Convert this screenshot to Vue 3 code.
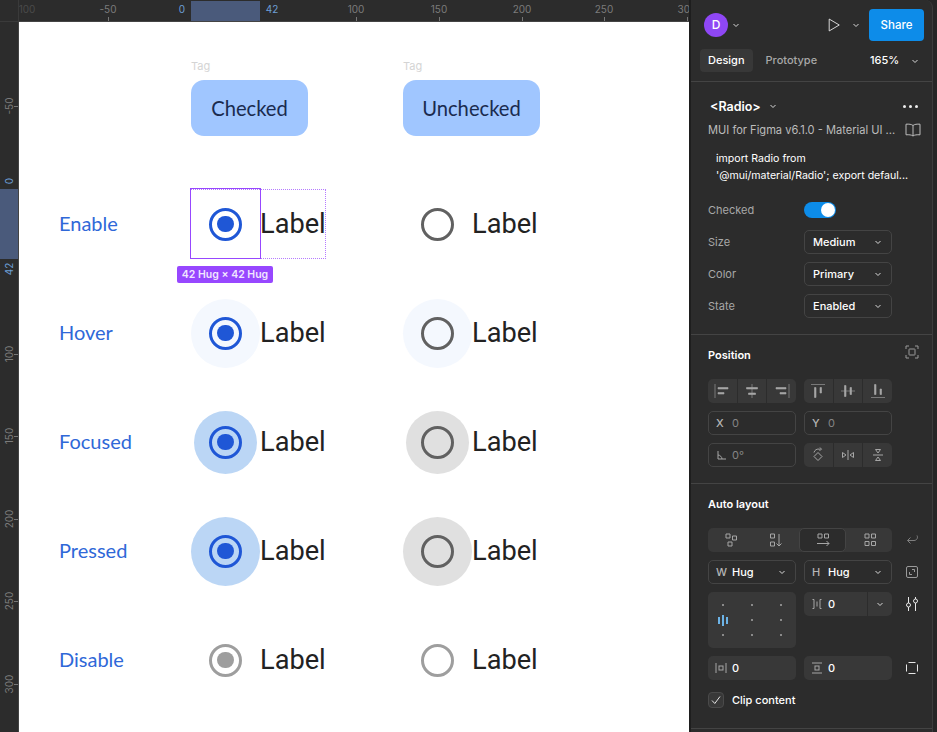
<template>
  <div class="app">
    <main class="workspace">
      <div class="corner"></div>
      <div class="ruler ruler--top">
        <span class="ruler__band ruler__band--top"></span>
        <template v-for="m in topMarks" :key="m.pos">
          <span class="ruler__num" :class="{ 'ruler__num--faint': m.faint }" :style="{ left: m.pos + 'px' }">{{ m.text }}</span>
          <i v-if="m.tick" class="ruler__tick" :style="{ left: m.pos + 'px' }"></i>
        </template>
        <span class="ruler__num ruler__num--active" style="left: 163px">0</span>
        <span class="ruler__num ruler__num--active" style="left: 253px">42</span>
      </div>
      <div class="ruler ruler--left">
        <span class="ruler__band ruler__band--left"></span>
        <template v-for="m in leftMarks" :key="m.text">
          <span class="ruler__num ruler__num--v" :style="{ top: m.pos + 'px' }">{{ m.text }}</span>
          <i class="ruler__tick ruler__tick--v" :style="{ top: m.pos + 'px' }"></i>
        </template>
        <span class="ruler__num ruler__num--v ruler__num--active" style="top: 159px">0</span>
        <span class="ruler__num ruler__num--v ruler__num--active" style="top: 247px">42</span>
      </div>

      <section class="board">
        <div class="board__head">
          <div class="tag-col tag-col--first">
            <span class="tag">Tag</span>
            <div class="chip chip--checked">Checked</div>
          </div>
          <div class="tag-col">
            <span class="tag">Tag</span>
            <div class="chip chip--unchecked">Unchecked</div>
          </div>
        </div>

        <div class="rows">
          <div v-for="row in rows" :key="row.name" class="row">
            <span class="row__name">{{ row.name }}</span>
            <div v-for="col in [true, false]" :key="col" class="radio-item">
              <div class="radio-box">
                <span v-if="row.halo" class="halo" :class="[`halo--${row.halo}`, col ? 'halo--blue' : 'halo--gray']"></span>
                <span class="ring" :class="[col ? 'ring--on' : 'ring--off', { 'ring--disabled': row.disabled }]">
                  <span v-if="col" class="ring__dot"></span>
                </span>
              </div>
              <span class="radio-label">Label</span>
            </div>
            <template v-if="row.selected">
              <span class="sel-outer"></span>
              <span class="sel-inner"></span>
              <span class="sel-size">42 Hug × 42 Hug</span>
            </template>
          </div>
        </div>
      </section>
    </main>

    <aside class="panel">
      <div class="panel__inner">
        <header class="top">
          <span class="avatar">D</span>
          <svg class="chev chev--avatar" viewBox="0 0 8 8"><path d="M1.5 3 4 5.5 6.5 3" /></svg>
          <svg class="play" viewBox="0 0 16 18"><path d="M2.5 2.2v13.6L14 9z" /></svg>
          <svg class="chev chev--play" viewBox="0 0 8 8"><path d="M1.5 3 4 5.5 6.5 3" /></svg>
          <button class="share">Share</button>
        </header>
        <nav class="tabs">
          <span class="tab tab--on">Design</span>
          <span class="tab">Prototype</span>
          <span class="zoom">165%</span>
          <svg class="chev chev--zoom" viewBox="0 0 8 8"><path d="M1.5 3 4 5.5 6.5 3" /></svg>
        </nav>

        <section class="sec sec--comp">
          <div class="comp-title">
            <strong>&lt;Radio&gt;</strong>
            <svg class="chev" viewBox="0 0 8 8"><path d="M1.5 3 4 5.5 6.5 3" /></svg>
            <span class="dots"><i></i><i></i><i></i></span>
          </div>
          <div class="comp-lib">
            <span>MUI for Figma v6.1.0 - Material UI ...</span>
            <svg class="book" viewBox="0 0 16 14"><path d="M8 2.5C6.5 1.2 4 1 1 1.200v10.600c3-.2 5.500 0 7 1.200 1.500-1.200 4-1.400 7-1.200V1.200C12 1 9.500 1.200 8 2.500zM8 2.500V13" /></svg>
          </div>
          <p class="comp-desc">import Radio from<br />'@mui/material/Radio'; export defaul...</p>
          <div class="props">
            <div class="prop">
              <span class="prop__name">Checked</span>
              <span class="toggle"><i></i></span>
            </div>
            <div v-for="p in props" :key="p.name" class="prop">
              <span class="prop__name">{{ p.name }}</span>
              <div class="select">
                <span>{{ p.value }}</span>
                <svg class="chev" viewBox="0 0 8 8"><path d="M1.5 3 4 5.5 6.5 3" /></svg>
              </div>
            </div>
          </div>
        </section>

        <section class="sec sec--pos">
          <div class="sec__head">
            <h4>Position</h4>
            <svg class="side-icon side-icon--frame" viewBox="0 0 14 14"><path d="M1 4V1h3M10 1h3v3M13 10v3h-3M4 13H1v-3" /><rect x="4" y="4" width="6" height="6" rx=".5" /></svg>
          </div>
          <div class="grid2">
            <div class="seg">
              <span v-for="ic in alignH" :key="ic" class="seg__cell"><svg class="ic ic--solid" viewBox="0 0 16 16"><path :d="ic" /></svg></span>
            </div>
            <div class="seg">
              <span v-for="ic in alignV" :key="ic" class="seg__cell"><svg class="ic ic--solid" viewBox="0 0 16 16"><path :d="ic" /></svg></span>
            </div>
            <div class="field"><b>X</b><span class="field__val">0</span></div>
            <div class="field"><b>Y</b><span class="field__val">0</span></div>
            <div class="field">
              <svg class="ic ic--angle" viewBox="0 0 12 12"><path d="M2 2v8h8M2 6c2 0 4 2 4 4" /></svg>
              <span class="field__val">0°</span>
            </div>
            <div class="seg">
              <span v-for="ic in transforms" :key="ic" class="seg__cell"><svg class="ic" viewBox="0 0 16 16"><path :d="ic" /></svg></span>
            </div>
          </div>
        </section>

        <section class="sec sec--auto">
          <h4>Auto layout</h4>
          <div class="auto-row">
            <div class="flow">
              <span v-for="(ic, i) in flows" :key="ic" class="flow__cell" :class="{ 'flow__cell--on': i === 2 }"><svg class="ic" viewBox="0 0 16 16"><path :d="ic" /></svg></span>
            </div>
            <svg class="side-icon side-icon--dim" viewBox="0 0 14 14"><path d="M12 2.500c1.200 2 0 5-3 5H2.500M5.500 4.500l-3 3 3 3" /></svg>
          </div>
          <div class="auto-row">
            <div class="grid2">
              <div class="field"><b>W</b><strong>Hug</strong><svg class="chev" viewBox="0 0 8 8"><path d="M1.5 3 4 5.5 6.5 3" /></svg></div>
              <div class="field"><b>H</b><strong>Hug</strong><svg class="chev" viewBox="0 0 8 8"><path d="M1.5 3 4 5.5 6.5 3" /></svg></div>
            </div>
            <svg class="side-icon" viewBox="0 0 14 14"><rect x="1.500" y="1.500" width="11" height="11" rx="1.500" /><path d="M4.500 7v2.500H7M7 4.500h2.500V7" /></svg>
          </div>
          <div class="auto-row auto-row--tall">
            <div class="grid2 grid2--top">
              <div class="align-box">
                <template v-for="n in 9" :key="n">
                  <span v-if="n === 4" class="align-bars"><i></i><i></i><i></i></span>
                  <i v-else class="align-dot"></i>
                </template>
              </div>
              <div class="gap-field">
                <svg class="ic ic--small" viewBox="0 0 12 12"><path d="M1.500 1.500H3v9H1.500M10.500 1.500H9v9h1.500M6 3.500v5" /></svg>
                <strong>0</strong>
                <span class="gap-field__drop"><svg class="chev" viewBox="0 0 8 8"><path d="M1.5 3 4 5.5 6.5 3" /></svg></span>
              </div>
            </div>
            <svg class="side-icon side-icon--tune" viewBox="0 0 14 16"><path d="M3.500 1v6M3.500 11v4M10.500 1v2M10.500 7v8" /><circle cx="3.500" cy="9" r="2" /><circle cx="10.500" cy="5" r="2" /></svg>
          </div>
          <div class="auto-row">
            <div class="grid2">
              <div class="pad-field">
                <svg class="ic ic--small" viewBox="0 0 12 12"><path d="M1 1v10M11 1v10" /><rect x="4" y="4" width="4" height="4" /></svg>
                <strong>0</strong>
              </div>
              <div class="pad-field">
                <svg class="ic ic--small" viewBox="0 0 12 12"><path d="M1 1h10M1 11h10" /><rect x="4" y="4" width="4" height="4" /></svg>
                <strong>0</strong>
              </div>
            </div>
            <svg class="side-icon side-icon--bright" viewBox="0 0 14 14"><path d="M3.500 1.500h7M3.500 12.500h7M1.500 3.500v7M12.500 3.500v7" /></svg>
          </div>
          <label class="clip">
            <span class="clip__box"><svg viewBox="0 0 12 12"><path d="M2 6.500 4.800 9.500 10 2.500" /></svg></span>
            Clip content
          </label>
        </section>
      </div>
    </aside>
  </div>
</template>

<script setup>
const topMarks = [
  { text: '100', pos: 8, faint: true },
  { text: '-50', pos: 89, tick: true },
  { text: '100', pos: 337, tick: true },
  { text: '150', pos: 420, tick: true },
  { text: '200', pos: 503, tick: true },
  { text: '250', pos: 585, tick: true },
  { text: '300', pos: 668, tick: true },
]

const leftMarks = [
  { text: '-50', pos: 84 },
  { text: '100', pos: 332 },
  { text: '150', pos: 414 },
  { text: '200', pos: 497 },
  { text: '250', pos: 579 },
  { text: '300', pos: 662 },
]

const rows = [
  { name: 'Enable', selected: true },
  { name: 'Hover', halo: 'hover' },
  { name: 'Focused', halo: 'focus' },
  { name: 'Pressed', halo: 'press' },
  { name: 'Disable', disabled: true },
]

const props = [
  { name: 'Size', value: 'Medium' },
  { name: 'Color', value: 'Primary' },
  { name: 'State', value: 'Enabled' },
]

const alignH = [
  'M1 1v14M4 4.500h10V6H4zM4 9.500h6V11H4z',
  'M8 1v14M2.500 4.500h11V6h-11zM4.500 10h7v1.500h-7z',
  'M15 1v14M2 4.500h10V6H2zM6 9.500h6V11H6z',
]
const alignV = [
  'M1 1.500h14M4.500 4.500H6v10H4.500zM10 4.500h1.500V10H10z',
  'M1 8h14M4.500 2.500H6v11H4.500zM10 4.500h1.500v7H10z',
  'M1 14.500h14M4.500 1.500H6v10H4.500zM10 6h1.500v5.500H10z',
]
const transforms = [
  'M8 5.500l4 4-4 4-4-4zM4 5.500C4.500 3 7 1.500 10 2.200M10 .5l1.500 1.800L9.500 3.500',
  'M8 3v10M2.500 5.500v5L6 8zM13.500 5.500v5L10 8z',
  'M3 8h10M5.500 2.500h5L8 6zM5.500 13.500h5L8 10z',
]
const flows = [
  'M3 2h4v4H3zM9.500 4h4v4h-4zM5 10h4v4H5z',
  'M2.500 2h4v4h-4zM2.500 10h4v4h-4zM11 2v12M8.500 11.500 11 14l2.500-2.500',
  'M3 2h4v4H3zM9.500 2h4v4h-4zM2 11.500h12M11.500 9l2.500 2.500-2.500 2.500',
  'M3 2h4v4H3zM9.500 2h4v4h-4zM3 9.500h4v4H3zM9.500 9.500h4v4h-4z',
]
</script>

<style scoped>
.app {
  width: 937px;
  height: 732px;
  display: flex;
  overflow: hidden;
  background: #2c2c2c;
  font-family: Inter, "Liberation Sans", sans-serif;
}

.workspace {
  width: 689px;
  flex: none;
  display: grid;
  grid-template-columns: 19px 670px;
  grid-template-rows: 22px 710px;
}

.corner {
  background: #2c2c2c;
  border-right: 1px solid #3a3a3a;
  border-bottom: 1px solid #3a3a3a;
  box-sizing: border-box;
}

.ruler {
  position: relative;
  overflow: hidden;
  background: #2c2c2c;
  box-sizing: border-box;
}

.ruler--top {
  border-bottom: 1px solid #444;
}

.ruler--left {
  border-right: 1px solid #444;
}

.ruler__band {
  position: absolute;
  background: #4a5a7b;
}

.ruler__band--top {
  left: 172px;
  top: 1px;
  width: 69px;
  height: 20px;
}

.ruler__band--left {
  left: 0;
  top: 167px;
  width: 18px;
  height: 70px;
}

.ruler__num {
  position: absolute;
  top: 3px;
  transform: translateX(-50%);
  color: #7b7b7b;
  font-size: 10px;
  line-height: 12px;
}

.ruler__num--faint {
  color: #4a4a4a;
}

.ruler__num--active {
  color: #6d9fd6;
}

.ruler__num--v {
  left: -3px;
  transform: translateY(-50%) rotate(-90deg);
  transform-origin: center;
  width: 24px;
  text-align: center;
  white-space: nowrap;
}

.ruler__tick {
  position: absolute;
  top: 17px;
  width: 1px;
  height: 4px;
  background: #777;
}

.ruler__tick--v {
  top: auto;
  left: 14px;
  width: 4px;
  height: 1px;
  background: #777;
}

.board {
  background: #fff;
  padding: 38px 0 0 172px;
  box-sizing: border-box;
  position: relative;
}

.board__head {
  display: flex;
  margin-bottom: 53px;
}

.tag-col {
  display: flex;
  flex-direction: column;
  align-items: flex-start;
  gap: 8px;
}

.tag-col--first {
  width: 212px;
}

.tag {
  color: #d4d4d4;
  font-size: 11px;
  line-height: 12px;
}

.chip {
  height: 56px;
  display: flex;
  align-items: center;
  justify-content: center;
  box-sizing: border-box;
  border-radius: 13px;
  background: #a0c6ff;
  color: #1a2b4f;
  font-family: Lato, sans-serif;
  font-size: 20.2px;
}

.chip--checked {
  width: 117px;
}

.chip--unchecked {
  width: 137px;
}

.rows {
  display: flex;
  flex-direction: column;
  gap: 39px;
  margin-left: -132px;
}

.row {
  position: relative;
  height: 70px;
  display: flex;
  align-items: center;
}

.row__name {
  width: 132px;
  flex: none;
  padding-bottom: 2px;
  color: #2f68d8;
  font-family: Lato, sans-serif;
  font-size: 20px;
}

.radio-item {
  width: 212px;
  flex: none;
  display: flex;
  align-items: center;
}

.radio-box {
  position: relative;
  width: 69px;
  height: 70px;
  flex: none;
  display: flex;
  align-items: center;
  justify-content: center;
}

.radio-label {
  color: #222;
  font-family: Roboto, sans-serif;
  font-size: 27.2px;
  line-height: 32px;
}

.halo {
  position: absolute;
  border-radius: 50%;
}

.halo--blue {
  background: #bbd6f5;
}

.halo--gray {
  background: #e0e0e0;
}

.halo--hover {
  inset: 1px 0 0;
}

.halo--hover.halo--blue,
.halo--hover.halo--gray {
  background: #f4f8fe;
}

.halo--focus {
  inset: 4px 3px 3px;
}

.halo--press {
  inset: 1px 0 0;
}

.ring {
  position: relative;
  width: 33px;
  height: 33px;
  box-sizing: border-box;
  border-radius: 50%;
  border: 3.5px solid #1f57d6;
  display: flex;
  align-items: center;
  justify-content: center;
}

.ring--off {
  border-color: #616161;
}

.ring__dot {
  width: 16.5px;
  height: 16.5px;
  border-radius: 50%;
  background: #1f57d6;
}

.ring--disabled {
  border-color: #9e9e9e;
}

.ring--disabled .ring__dot {
  background: #9e9e9e;
}

.sel-outer {
  position: absolute;
  left: 131px;
  top: 0;
  width: 136px;
  height: 70px;
  box-sizing: border-box;
  border: 1px dotted #b57bff;
}

.sel-inner {
  position: absolute;
  left: 131px;
  top: -1px;
  width: 71px;
  height: 71px;
  box-sizing: border-box;
  border: 1px solid #9747ff;
}

.sel-size {
  position: absolute;
  left: 118px;
  top: 77px;
  width: 96px;
  height: 17px;
  border-radius: 2px;
  background: #9747ff;
  color: #f1e6ff;
  font-size: 10.5px;
  font-weight: 600;
  line-height: 17px;
  text-align: center;
  white-space: nowrap;
}

.panel {
  flex: 1;
  border-left: 2px solid #1e1e1e;
  background: #262626;
  box-sizing: border-box;
}

.panel__inner {
  width: 241px;
  height: 732px;
  background: #2c2c2c;
  border-right: 1px solid #3c3c3c;
  border-radius: 0 8px 0 0;
  color: #fff;
  font-size: 11px;
}

.chev {
  width: 8px;
  height: 8px;
  flex: none;
}

.chev path {
  fill: none;
  stroke: #d8d8d8;
  stroke-width: 1;
}

.top {
  height: 49px;
  display: flex;
  align-items: center;
  padding: 0 0 0 13px;
  box-sizing: border-box;
}

.avatar {
  width: 24px;
  height: 24px;
  border-radius: 50%;
  background: #8f47f5;
  display: flex;
  align-items: center;
  justify-content: center;
  font-size: 12px;
  font-weight: 500;
}

.chev--avatar {
  margin-left: 4px;
}

.play {
  width: 14px;
  height: 16px;
  margin-left: 87px;
}

.play path {
  fill: none;
  stroke: #eee;
  stroke-width: 1;
  stroke-linejoin: round;
}

.chev--play {
  margin-left: 11px;
}

.share {
  width: 55px;
  height: 32px;
  margin-left: 9px;
  border: 0;
  border-radius: 4px;
  background: #0d8ce9;
  color: #fff;
  font: 500 11.5px Inter, sans-serif;
}

.tabs {
  height: 33px;
  display: flex;
  align-items: flex-start;
  padding-left: 9px;
  border-bottom: 1px solid #444;
  box-sizing: border-box;
  position: relative;
}

.tab {
  height: 23px;
  line-height: 23px;
  padding: 0 8px;
  margin-right: 5px;
  color: #a8a8a8;
  font-weight: 500;
  border-radius: 4px;
}

.tab--on {
  background: #383838;
  color: #fff;
}

.zoom {
  position: absolute;
  left: 179px;
  top: 0;
  line-height: 23px;
  font-weight: 500;
}

.chev--zoom {
  position: absolute;
  left: 220px;
  top: 8px;
}

.sec {
  padding: 0 0 0 17px;
  border-bottom: 1px solid #444;
  box-sizing: border-box;
}

.sec--comp {
  height: 253px;
  padding-top: 16px;
}

.comp-title {
  height: 16px;
  display: flex;
  align-items: center;
  gap: 8px;
  padding-left: 2px;
  position: relative;
}

.comp-title strong {
  font-size: 12.5px;
  font-weight: 600;
}

.dots {
  position: absolute;
  left: 195px;
  top: 7px;
  display: flex;
  gap: 3px;
}

.dots i {
  width: 3px;
  height: 3px;
  border-radius: 50%;
  background: #eee;
}

.comp-lib {
  margin-top: 8px;
  height: 16px;
  display: flex;
  align-items: center;
  color: #bcbcbc;
  font-size: 11.1px;
  position: relative;
  white-space: nowrap;
}

.book {
  position: absolute;
  left: 197px;
  top: 1px;
  width: 16px;
  height: 14px;
}

.book path {
  fill: none;
  stroke: #bbb;
}

.comp-desc {
  margin: 12px 0 0 8px;
  line-height: 17px;
  font-size: 10.6px;
  white-space: nowrap;
}

.props {
  margin-top: 14px;
  display: flex;
  flex-direction: column;
  gap: 8px;
}

.prop {
  height: 24px;
  display: flex;
  align-items: center;
}

.prop__name {
  width: 96px;
  color: #a8a8a8;
}

.toggle {
  width: 32px;
  height: 16px;
  border-radius: 8px;
  background: #0d8ce9;
  position: relative;
}

.toggle i {
  position: absolute;
  right: 1px;
  top: 1px;
  width: 14px;
  height: 14px;
  border-radius: 50%;
  background: #fff;
}

.select {
  width: 88px;
  height: 24px;
  box-sizing: border-box;
  border: 1px solid #444;
  border-radius: 5px;
  padding: 0 9px 0 8px;
  display: flex;
  align-items: center;
  justify-content: space-between;
  font-weight: 500;
}

h4 {
  margin: 0;
  font-size: 11px;
  font-weight: 600;
  line-height: 16px;
}

.sec--pos {
  height: 149px;
  padding-top: 11px;
}

.sec__head {
  height: 21px;
  display: flex;
  align-items: flex-start;
  justify-content: space-between;
  width: 211px;
  padding-top: 1px;
  margin-bottom: 11px;
}

.side-icon {
  width: 14px;
  height: 14px;
  flex: none;
}

.side-icon path,
.side-icon rect,
.side-icon circle {
  fill: none;
  stroke: #9a9a9a;
  stroke-width: 1;
}

.side-icon--frame {
  margin-top: -2px;
}

.side-icon--dim path {
  stroke: #7e7e7e;
}

.side-icon--tune path,
.side-icon--tune circle,
.side-icon--bright path {
  stroke: #e8e8e8;
}

.side-icon--tune {
  height: 16px;
  margin-top: 4px;
}

.grid2 {
  display: grid;
  grid-template-columns: 88px 88px;
  grid-auto-rows: 24px;
  gap: 8px;
}

.seg {
  display: flex;
  border-radius: 5px;
  overflow: hidden;
  gap: 1px;
}

.seg__cell {
  flex: 1;
  background: #383838;
  display: flex;
  align-items: center;
  justify-content: center;
}

.ic {
  width: 16px;
  height: 16px;
}

.ic path,
.ic rect {
  fill: none;
  stroke: #a6a6a6;
  stroke-width: 1;
}

.ic--solid path {
  fill: #a6a6a6;
  stroke-width: .6;
}

.ic--angle {
  width: 12px;
  height: 12px;
  margin-right: 4px;
}

.ic--small {
  width: 12px;
  height: 12px;
}

.field {
  box-sizing: border-box;
  border: 1px solid #444;
  border-radius: 5px;
  display: flex;
  align-items: center;
  padding: 0 9px 0 7px;
}

.field b {
  width: 16px;
  color: #b5b5b5;
  font-weight: 500;
}

.field strong {
  flex: 1;
  font-weight: 500;
}

.field__val {
  color: #858585;
}

.sec--auto {
  padding-top: 12px;
  height: 245px;
}

.sec--auto h4 {
  margin-bottom: 16px;
}

.auto-row {
  display: flex;
  align-items: center;
  gap: 13px;
  margin-bottom: 8px;
}

.auto-row--tall {
  align-items: flex-start;
  height: 56px;
}

.flow {
  width: 184px;
  height: 24px;
  display: flex;
  border-radius: 5px;
  background: #383838;
}

.flow__cell {
  flex: 1;
  display: flex;
  align-items: center;
  justify-content: center;
  border-radius: 5px;
}

.flow__cell--on {
  background: #2c2c2c;
  border: 1px solid #444;
  box-sizing: border-box;
  margin: 0 1px;
}

.grid2--top {
  height: 56px;
}

.align-box {
  grid-row: span 2;
  height: 56px;
  background: #383838;
  border-radius: 5px;
  display: grid;
  grid-template-columns: repeat(3, 1fr);
  grid-template-rows: repeat(3, 15px);
  align-content: center;
  justify-items: center;
  align-items: center;
  box-sizing: border-box;
}

.align-dot {
  width: 2px;
  height: 2px;
  background: #8a8a8a;
}

.align-bars {
  display: flex;
  align-items: center;
  gap: 2px;
}

.align-bars i {
  width: 2px;
  height: 7px;
  background: #6cb3e6;
}

.align-bars i:nth-child(2) {
  height: 11px;
}

.gap-field,
.pad-field {
  background: #383838;
  border-radius: 5px;
  display: flex;
  align-items: center;
  padding-left: 7px;
  gap: 5px;
}

.gap-field strong,
.pad-field strong {
  flex: 1;
  font-weight: 500;
}

.gap-field__drop {
  width: 24px;
  height: 24px;
  border-left: 1px solid #2c2c2c;
  display: flex;
  align-items: center;
  justify-content: center;
}

.clip {
  display: flex;
  align-items: center;
  gap: 8px;
  margin-top: 12px;
  font-weight: 500;
}

.clip__box {
  width: 16px;
  height: 16px;
  box-sizing: border-box;
  border: 1px solid #4a4a4a;
  border-radius: 4px;
  background: #383838;
  display: flex;
  align-items: center;
  justify-content: center;
}

.clip__box svg {
  width: 12px;
  height: 12px;
}

.clip__box path {
  fill: none;
  stroke: #e6e6e6;
}
</style>
